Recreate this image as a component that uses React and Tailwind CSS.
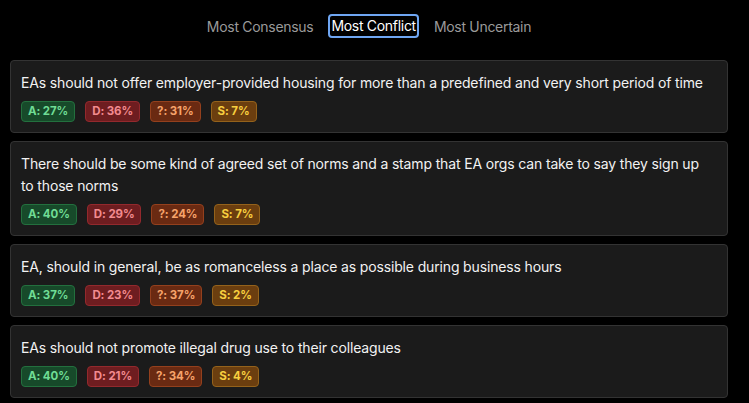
const items = [
  {
    text: 'EAs should not offer employer-provided housing for more than a predefined and very short period of time',
    a: 27, d: 36, u: 31, s: 7,
  },
  {
    text: 'There should be some kind of agreed set of norms and a stamp that EA orgs can take to say they sign up to those norms',
    a: 40, d: 29, u: 24, s: 7,
  },
  {
    text: 'EA, should in general, be as romanceless a place as possible during business hours',
    a: 37, d: 23, u: 37, s: 2,
  },
  {
    text: 'EAs should not promote illegal drug use to their colleagues',
    a: 40, d: 21, u: 34, s: 4,
  },
];

function Badge({ className, children }) {
  return (
    <span className={'inline-flex items-center h-[21px] px-[6px] rounded-[4px] border text-[11.5px] font-bold tracking-[-0.1px] ' + className}>
      {children}
    </span>
  );
}

export default function App() {
  return (
    <div className="min-h-screen bg-black text-white pt-[14px] px-[10px]" style={{ fontFamily: 'Inter, "Noto Sans", sans-serif' }}>
      <div className="w-[718px] flex justify-center items-center gap-[14px] text-[14px] h-[24px] tracking-[-0.3px]">
        <button className="text-[#9a9a9a] px-px">Most Consensus</button>
        <button className="text-white border-2 border-[#6fa6f2] rounded-[4px] h-[24px] px-px leading-none">Most Conflict</button>
        <button className="text-[#9a9a9a] px-px">Most Uncertain</button>
      </div>
      <div className="mt-[22px] flex flex-col gap-[8px] w-[718px] tracking-[-0.15px]">
        {items.map((it, i) => (
          <div key={i} className="bg-[#1b1b1b] border border-[#333333] rounded-[4px] pl-[10px] pr-[13px] pt-[11px] pb-[10px]">
            <p className="text-[14px] leading-[22px] text-[#f2f2f2]">{it.text}</p>
            <div className="mt-[7px] flex gap-[10px]">
              <Badge className="bg-[#174a2a] border-[#23703e] text-[#6fdc95]">A: {it.a}%</Badge>
              <Badge className="bg-[#6e1d20] border-[#93292d] text-[#f28a8f]">D: {it.d}%</Badge>
              <Badge className="bg-[#6a2a12] border-[#94401d] text-[#f6a36a]">?: {it.u}%</Badge>
              <Badge className="bg-[#6b3e0f] border-[#94621b] text-[#f8cf3f]">S: {it.s}%</Badge>
            </div>
          </div>
        ))}
      </div>
    </div>
  );
}
